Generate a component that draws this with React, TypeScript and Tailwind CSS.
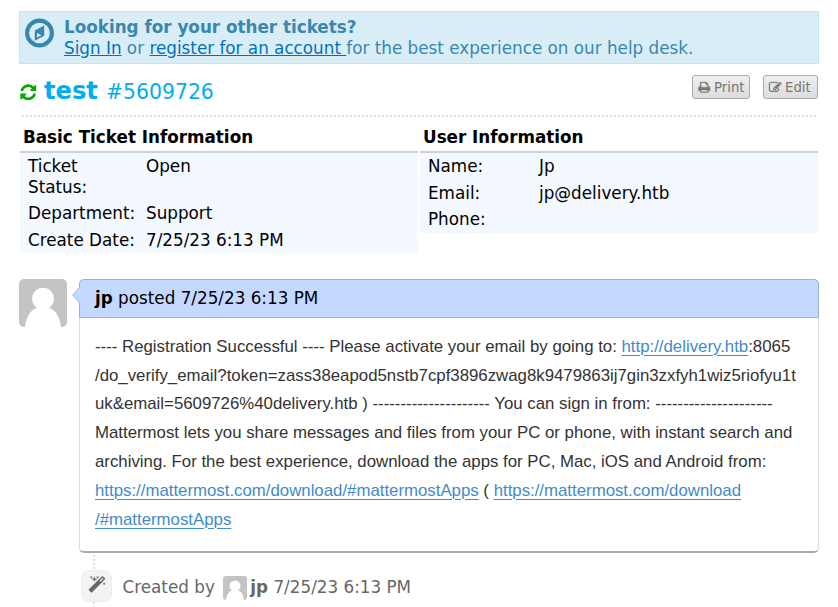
import React from "react";

const REFRESH =
  "M1639 1056q0 5-1 7-64 268-268 434.5t-478 166.5q-146 0-282.5-55t-243.5-157l-129 129q-19 19-45 19t-45-19-19-45v-448q0-26 19-45t45-19h448q26 0 45 19t19 45-19 45l-137 137q71 66 161 102t187 36q134 0 250-65t186-179q11-17 53-117 8-23 30-23h192q13 0 22.5 9.5t9.5 22.5zm25-800v448q0 26-19 45t-45 19h-448q-26 0-45-19t-19-45 19-45l138-138q-148-137-349-137-134 0-250 65t-186 179q-11 17-53 117-8 23-30 23h-199q-13 0-22.5-9.5t-9.5-22.5v-7q65-268 270-434.5t480-166.5q146 0 284 55.5t245 156.5l130-129q19-19 45-19t45 19 19 45z";
const PRINT =
  "M448 1536h896v-256h-896v256zm0-640h896v-384h-160q-40 0-68-28t-28-68v-160h-640v640zm1152 64q0-26-19-45t-45-19-45 19-19 45 19 45 45 19 45-19 19-45zm128 0v416q0 13-9.5 22.5t-22.5 9.5h-224v160q0 40-28 68t-68 28h-960q-40 0-68-28t-28-68v-160h-224q-13 0-22.5-9.5t-9.5-22.5v-416q0-79 56.5-135.5t135.5-56.5h64v-544q0-40 28-68t68-28h672q40 0 88 20t76 48l152 152q28 28 48 76t20 88v256h64q79 0 135.5 56.5t56.5 135.5z";
const EDIT =
  "M888 1184l116-116-152-152-116 116v56h96v96h56zm440-720q-16-16-33 1l-350 350q-17 17-1 33t33-1l350-350q17-17 1-33zm80 594v190q0 119-84.5 203.5t-203.5 84.5h-832q-119 0-203.5-84.5t-84.5-203.5v-832q0-119 84.5-203.5t203.5-84.5h832q63 0 117 25 15 7 18 23 3 17-9 29l-49 49q-14 14-32 8-23-6-45-6h-832q-66 0-113 47t-47 113v832q0 66 47 113t113 47h832q66 0 113-47t47-113v-126q0-13 9-22l64-64q15-15 35-7t20 29zm-96-738l288 288-672 672h-288v-288zm444 132l-92 92-288-288 92-92q28-28 68-28t68 28l152 152q28 28 28 68t-28 68z";
const MAGIC =
  "M1254 581l293-293-107-107-293 293zm447-293q0 27-18 45l-1286 1286q-18 18-45 18t-45-18l-198-198q-18-18-18-45t18-45l1286-1286q18-18 45-18t45 18l198 198q18 18 18 45zm-1351-190l98 30-98 30-30 98-30-98-98-30 98-30 30-98zm350 162l196 60-196 60-60 196-60-196-196-60 196-60 60-196zm930 478l98 30-98 30-30 98-30-98-98-30 98-30 30-98zm-640-640l98 30-98 30-30 98-30-98-98-30 98-30 30-98z";

function Icon({ d, className }: { d: string; className: string }) {
  return (
    <svg
      viewBox="0 0 1792 1792"
      fill="currentColor"
      stroke="currentColor"
      className={`block shrink-0 overflow-visible ${className}`}
    >
      <path d={d} />
    </svg>
  );
}

function Compass() {
  return (
    <svg viewBox="0 0 30 30" className="block size-[30px] shrink-0 text-[#3a87ad]">
      <circle cx="14.5" cy="15" r="12.4" fill="none" stroke="currentColor" strokeWidth="4.1" />
      <path
        fill="currentColor"
        fillRule="evenodd"
        d="M9.8 12.4 19.2 7.6V17.8L9.8 22.7ZM12 15V19.6L16.4 17.3Z"
      />
    </svg>
  );
}

function Avatar({ className }: { className: string }) {
  return (
    <svg viewBox="0 0 48 48" className={`block shrink-0 ${className}`}>
      <rect width="48" height="48" fill="#c4c4c4" />
      <circle cx="24" cy="19.7" r="10.9" fill="#fff" />
      <path d="M6 48C7 37 13 29 20 28.5H28C35 29 41 37 42 48Z" fill="#fff" />
    </svg>
  );
}

function Button({ d, label, width }: { d: string; label: string; width: string }) {
  return (
    <button
      className={`flex h-6 items-center gap-1 rounded-[3px] border border-[#aaa] bg-linear-to-b from-[#efefef] to-[#dcdcdc] pt-px pl-[4.5px] leading-none text-[#777] ${width}`}
    >
      <Icon d={d} className="size-[12.5px] stroke-[50]" />
      <span className="text-[13.3px]">{label}</span>
    </button>
  );
}

function InfoTable({
  title,
  rows,
  labelWidth,
  rowPadding,
}: {
  title: string;
  rows: string[][];
  labelWidth: string;
  rowPadding: string;
}) {
  return (
    <section className="w-[398px]">
      <h2 className="h-[29px] pt-px pl-[3px] leading-[28px] font-bold text-black">{title}</h2>
      <div className="border-t-2 border-[#d0d0d0] bg-[#f4f8ff]">
        {rows.map(([label, value]) => (
          <div key={label} className={`flex pt-[3px] pl-2 ${rowPadding}`}>
            <div className={`shrink-0 pr-2 ${labelWidth}`}>{label}</div>
            <div>{value}</div>
          </div>
        ))}
      </div>
    </section>
  );
}

const link = "text-[#428bca] underline decoration-1 underline-offset-[3px]";

export default function App() {
  return (
    <div className="h-[607px] w-[838px] overflow-hidden bg-white pt-[11px] pl-[19px] font-['DejaVu_Sans',sans-serif] text-[16.8px] leading-[21px] text-black">
      <div className="flex h-[53px] w-[800px] border border-[#bce8f1] bg-[#d9edf7] pt-[5px] pl-[5px] text-[#3a87ad]">
        <div className="pt-px">
          <Compass />
        </div>
        <div className="pl-[9px] whitespace-nowrap">
          <div className="font-bold">Looking for your other tickets?</div>
          <div>
            <a className="text-[#0072bc] underline">Sign In</a> or{" "}
            <a className="whitespace-pre text-[#0072bc] underline">register for an account </a>for the best
            experience on our help desk.
          </div>
        </div>
      </div>

      <div className="flex h-[51px] w-[799px] items-start pt-[11px]">
        <Icon d={REFRESH} className="mt-[7.5px] size-[18.5px] text-[#0a0]" />
        <h1 className="flex items-baseline gap-[8px] pl-[6.5px] leading-[32px] text-[#00aeef]">
          <span className="text-[24.2px] font-bold">test</span>
          <span className="text-[20.4px]">#5609726</span>
        </h1>
        <div className="ml-auto flex gap-[13px]">
          <Button d={PRINT} label="Print" width="w-[58px]" />
          <Button d={EDIT} label="Edit" width="w-[55px]" />
        </div>
      </div>
      <div className="ml-[3px] h-[2px] w-[795px] bg-[repeating-linear-gradient(90deg,#ddd_0_2px,transparent_2px_4px)]" />

      <div className="ml-px flex h-[162px] items-start gap-[2px] pt-[5px]">
        <InfoTable
          title="Basic Ticket Information"
          labelWidth="w-[118px]"
          rowPadding="pb-[2.45px]"
          rows={[
            ["Ticket Status:", "Open"],
            ["Department:", "Support"],
            ["Create Date:", "7/25/23 6:13 PM"],
          ]}
        />
        <InfoTable
          title="User Information"
          labelWidth="w-[111px]"
          rowPadding="pb-[2.65px]"
          rows={[
            ["Name:", "Jp"],
            ["Email:", "jp@delivery.htb"],
            ["Phone:", ""],
          ]}
        />
      </div>

      <div className="flex gap-3">
        <Avatar className="size-12 rounded-[5px]" />
        <article className="relative h-[274px] w-[740px] rounded-[5px] border border-b-2 border-[#ddd] border-b-[#aaa]">
          <header className="-mx-px -mt-px h-[39px] rounded-t-[5px] border border-[#9cb0d0] bg-[#c3d9ff] pl-[15px] leading-[37px]">
            <b>jp</b> posted 7/25/23 6:13 PM
          </header>
          <svg viewBox="0 0 8 16" className="absolute top-[7px] -left-2 h-4 w-2">
            <path d="M8 0 .7 8 8 16" fill="#c3d9ff" stroke="#9cb0d0" />
          </svg>
          <div className="pt-[14.8px] pl-[15px] font-['Liberation_Sans',sans-serif] text-[16.81px] leading-[28.8px] whitespace-nowrap text-[#333]">
            <div>
              ---- Registration Successful ---- Please activate your email by going to:{" "}
              <a className={link}>http://delivery.htb</a>:8065
            </div>
            <div>/do_verify_email?token=zass38eapod5nstb7cpf3896zwag8k9479863ij7gin3zxfyh1wiz5riofyu1t</div>
            <div>uk&amp;email=5609726%40delivery.htb ) --------------------- You can sign in from: ---------------------</div>
            <div>Mattermost lets you share messages and files from your PC or phone, with instant search and</div>
            <div>archiving. For the best experience, download the apps for PC, Mac, iOS and Android from:</div>
            <div>
              <a className={link}>https://mattermost.com/download/#mattermostApps</a> ({" "}
              <a className={link}>https://mattermost.com/download</a>
            </div>
            <div>
              <a className={link}>/#mattermostApps</a>
            </div>
          </div>
        </article>
      </div>

      <div className="flex h-[54px] pl-[62px] text-[#666]">
        <div className="flex w-[31px] flex-col">
          <div className="mt-[2px] ml-3 h-[15px] w-[2px] shrink-0 bg-[repeating-linear-gradient(180deg,#ddd_0_2px,transparent_2px_4px)]" />
          <div className="flex h-8 w-[31px] shrink-0 justify-center rounded-lg border border-[#eee] bg-[#f3f3f3] pt-[5px]">
            <Icon d={MAGIC} className="size-[18px] stroke-[30]" />
          </div>
          <div className="ml-3 h-[5px] w-[2px] shrink-0 bg-[repeating-linear-gradient(180deg,#ddd_0_2px,transparent_2px_4px)]" />
        </div>
        <div className="flex items-start pt-[23px] pl-[10.5px] whitespace-nowrap">
          <span className="pt-px">Created by</span>
          <Avatar className="mr-[3.5px] ml-[8px] size-6 rounded-[3px]" />
          <span className="pt-px">
            <b>jp</b> 7/25/23 6:13 PM
          </span>
        </div>
      </div>
    </div>
  );
}
